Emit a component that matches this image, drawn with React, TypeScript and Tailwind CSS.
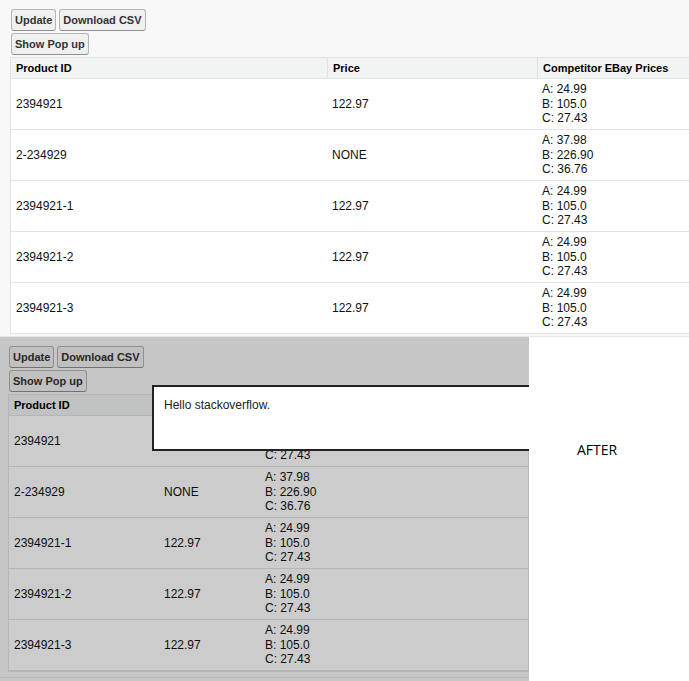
import React from "react";

type Row = {
  id: string;
  price: string;
  ebay: string[];
};

const rows: Row[] = [
  { id: "2394921", price: "122.97", ebay: ["A: 24.99", "B: 105.0", "C: 27.43"] },
  { id: "2-234929", price: "NONE", ebay: ["A: 37.98", "B: 226.90", "C: 36.76"] },
  { id: "2394921-1", price: "122.97", ebay: ["A: 24.99", "B: 105.0", "C: 27.43"] },
  { id: "2394921-2", price: "122.97", ebay: ["A: 24.99", "B: 105.0", "C: 27.43"] },
  { id: "2394921-3", price: "122.97", ebay: ["A: 24.99", "B: 105.0", "C: 27.43"] },
];

const Btn = ({ label }: { label: string }) => (
  <button className="h-[22px] px-[3px] rounded-[3px] border border-[#b5b5b5] border-b-[#8f8f8f] bg-[#f0f0f0] text-[11px] font-bold text-[#333] leading-none">
    {label}
  </button>
);

type BlockProps = {
  cols: string;
  open?: boolean;
};

// one "page": buttons + pageBlockTable
const PageBlock = ({ cols, open }: BlockProps) => {
  return (
    <div className="flex flex-col gap-[2px]">
      <div className="flex flex-col gap-[2px] pl-[1px] pt-[9px]">
        <div className="flex gap-[3px]">
          <Btn label="Update" />
          <Btn label="Download CSV" />
        </div>
        <div className="flex">
          <Btn label="Show Pop up" />
        </div>
      </div>
      <div
        className={`border-l border-[#e0e3e5] bg-white ${open ? "border-r border-b" : ""}`}
      >
        <div
          className={`grid ${cols} h-[22px] bg-[#f2f3f3] border-y border-[#e0e3e5] text-[11px] font-bold text-black`}
        >
          <div className="px-[5px] flex items-center">Product ID</div>
          <div className="px-[5px] flex items-center border-l border-[#e0e3e5]">Price</div>
          <div className="px-[5px] flex items-center border-l border-[#e0e3e5]">
            Competitor EBay Prices
          </div>
        </div>
        {rows.map((r, i) => (
          <div
            key={i}
            className={`grid ${cols} h-[51px] border-b border-[#e3e3e3] text-[12px] text-[#111]`}
          >
            <div className="px-[5px] flex items-center">{r.id}</div>
            <div className="px-[5px] flex items-center">{r.price}</div>
            <div className="px-[5px] flex flex-col justify-center leading-[14.5px]">
              {r.ebay.map((e) => (
                <span key={e}>{e}</span>
              ))}
            </div>
          </div>
        ))}
      </div>
    </div>
  );
};

export default function App() {
  return (
    <div className="w-[689px] h-[681px] overflow-hidden bg-white font-['Liberation_Sans',Arial,sans-serif]">
      {/* before */}
      <div className="h-[337px] bg-[#f8f8f8] pl-[10px] border-b border-[#e6e6e6]">
        <PageBlock cols="grid-cols-[316px_210px_1fr]" />
      </div>

      {/* after */}
      <div className="flex h-[344px]">
        <div className="relative w-[529px] h-full overflow-hidden bg-[#f8f8f8] pl-[8px]">
          <PageBlock cols="grid-cols-[150px_101px_1fr]" open />
          <div className="absolute left-0 right-0 top-[340px] border-b border-[#e6e6e6]" />
          <div className="absolute inset-0 bg-black/20" />
          <div className="absolute left-[152px] top-[48px] w-[420px] h-[66px] border-2 border-[#222] bg-white px-[10px] pt-[9px] text-[12px] text-[#222]">
            Hello stackoverflow.
          </div>
        </div>
        <div className="flex-1 pl-[48px] pt-[102px] font-['Open_Sans',sans-serif] text-[14px] text-black">
          AFTER
        </div>
      </div>
    </div>
  );
}
